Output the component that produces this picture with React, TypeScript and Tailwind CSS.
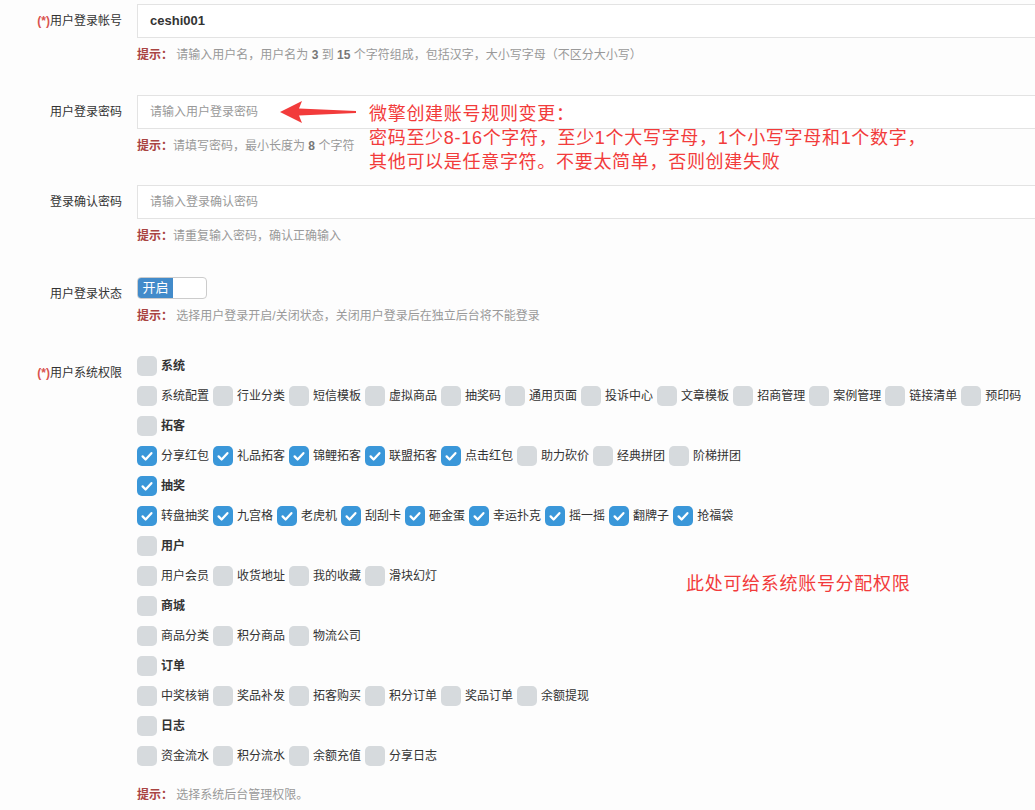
import clsx from 'clsx';

type Perm = { name: string; checked?: boolean };
type Group = { title: string; checked?: boolean; items: Perm[] };

const groups: Group[] = [
  {
    title: '系统',
    items: ['系统配置', '行业分类', '短信模板', '虚拟商品', '抽奖码', '通用页面', '投诉中心', '文章模板', '招商管理', '案例管理', '链接清单', '预印码'].map((name) => ({ name })),
  },
  {
    title: '拓客',
    items: [
      { name: '分享红包', checked: true },
      { name: '礼品拓客', checked: true },
      { name: '锦鲤拓客', checked: true },
      { name: '联盟拓客', checked: true },
      { name: '点击红包', checked: true },
      { name: '助力砍价' },
      { name: '经典拼团' },
      { name: '阶梯拼团' },
    ],
  },
  {
    title: '抽奖',
    checked: true,
    items: ['转盘抽奖', '九宫格', '老虎机', '刮刮卡', '砸金蛋', '幸运扑克', '摇一摇', '翻牌子', '抢福袋'].map((name) => ({ name, checked: true })),
  },
  { title: '用户', items: ['用户会员', '收货地址', '我的收藏', '滑块幻灯'].map((name) => ({ name })) },
  { title: '商城', items: ['商品分类', '积分商品', '物流公司'].map((name) => ({ name })) },
  { title: '订单', items: ['中奖核销', '奖品补发', '拓客购买', '积分订单', '奖品订单', '余额提现'].map((name) => ({ name })) },
  { title: '日志', items: ['资金流水', '积分流水', '余额充值', '分享日志'].map((name) => ({ name })) },
];

function Box({ checked }: { checked?: boolean }) {
  return (
    <span
      className={clsx(
        'flex h-5 w-5 shrink-0 items-center justify-center rounded-[5px]',
        checked ? 'bg-[#3a97d9]' : 'bg-[#d6dadd]'
      )}
    >
      {checked && (
        <svg viewBox="0 0 20 20" className="h-5 w-5">
          <path d="M5.6 10.4l3 3.1 5.8-6.3" stroke="white" strokeWidth="2.3" fill="none" strokeLinecap="round" strokeLinejoin="round" />
        </svg>
      )}
    </span>
  );
}

function Hint({ children }: { children: React.ReactNode }) {
  return (
    <div className="mt-[8px] text-[12px] leading-[18px] text-[#999]">
      <span className="font-bold text-[#a94442]">提示：</span>
      {children}
    </div>
  );
}

function Label({ children, required }: { children: React.ReactNode; required?: boolean }) {
  return (
    <div className="w-[137px] shrink-0 pr-[15px] pt-[7px] text-right text-[12px] leading-[20px] text-[#333]">
      {required && <span className="font-bold text-[#d9534f]">(*)</span>}
      {children}
    </div>
  );
}

export default function App() {
  return (
    <div className="relative min-h-[810px] w-full overflow-hidden bg-[#fdfdfd] font-['Liberation_Sans','Noto_Sans_CJK_SC',sans-serif] pt-[4px]">
      {/* 帐号 */}
      <div className="flex">
        <Label required>用户登录帐号</Label>
        <div className="flex-1">
          <div className="flex h-[34px] items-center border border-r-0 border-[#e3e3e3] bg-white pl-[12px] text-[13px] font-bold text-[#333]">
            ceshi001
          </div>
          <Hint>
            {' '}请输入用户名，用户名为 <b className="text-[#777]">3</b> 到 <b className="text-[#777]">15</b> 个字符组成，包括汉字，大小写字母（不区分大小写）
          </Hint>
        </div>
      </div>

      {/* 密码 */}
      <div className="mt-[31px] flex">
        <Label>用户登录密码</Label>
        <div className="flex-1">
          <div className="flex h-[34px] items-center border border-r-0 border-[#e3e3e3] bg-white pl-[12px] text-[12px] text-[#999]">
            请输入用户登录密码
          </div>
          <Hint>
            请填写密码，最小长度为 <b className="text-[#777]">8</b> 个字符
          </Hint>
        </div>
      </div>

      {/* 确认密码 */}
      <div className="mt-[30px] flex">
        <Label>登录确认密码</Label>
        <div className="flex-1">
          <div className="flex h-[34px] items-center border border-r-0 border-[#e3e3e3] bg-white pl-[12px] text-[12px] text-[#999]">
            请输入登录确认密码
          </div>
          <Hint>请重复输入密码，确认正确输入</Hint>
        </div>
      </div>

      {/* 状态 */}
      <div className="mt-[32px] flex">
        <Label>用户登录状态</Label>
        <div className="flex-1">
          <div className="flex h-[22px] w-[70px] overflow-hidden rounded-[4px] border border-[#ccc] bg-white">
            <span className="flex w-[35px] items-center justify-center bg-[#428bca] text-[13px] text-white">开启</span>
          </div>
          <Hint> 选择用户登录开启/关闭状态，关闭用户登录后在独立后台将不能登录</Hint>
        </div>
      </div>

      {/* 权限 */}
      <div className="mt-[31px] flex">
        <Label required>用户系统权限</Label>
        <div className="flex-1">
          <div className="flex flex-col gap-[10px]">
            {groups.map((g) => (
              <div key={g.title} className="flex flex-col gap-[10px]">
                <div className="flex items-center">
                  <Box checked={g.checked} />
                  <span className="ml-[4px] text-[12px] font-bold leading-5 text-[#333]">{g.title}</span>
                </div>
                <div className="flex items-center">
                  {g.items.map((it) => (
                    <div key={it.name} className="mr-[4px] flex items-center">
                      <Box checked={it.checked} />
                      <span className="ml-[4px] text-[12px] leading-5 text-[#333]">{it.name}</span>
                    </div>
                  ))}
                </div>
              </div>
            ))}
          </div>
          <div className="mt-[20px] text-[12px] leading-[18px] text-[#999]">
            <span className="font-bold text-[#a94442]">提示：</span> 选择系统后台管理权限。
          </div>
        </div>
      </div>

      {/* 标注 */}
      <svg className="absolute left-[279px] top-[99px]" width="78" height="26" viewBox="0 0 78 26">
        <path d="M1 13 L23 2 L20 9.5 L77 12 L77 14 L20 16.5 L23 24 Z" fill="#f23b3b" />
      </svg>
      <div className="absolute left-[369px] top-[102px] text-[18px] leading-[24px] tracking-[0.7px] text-[#f23b3b]">
        <div>微擎创建账号规则变更：</div>
        <div>密码至少8-16个字符，至少1个大写字母，1个小写字母和1个数字，</div>
        <div>其他可以是任意字符。不要太简单，否则创建失败</div>
      </div>
      <div className="absolute left-[686px] top-[572px] text-[18px] leading-[24px] tracking-[0.7px] text-[#f23b3b]">
        此处可给系统账号分配权限
      </div>
    </div>
  );
}
